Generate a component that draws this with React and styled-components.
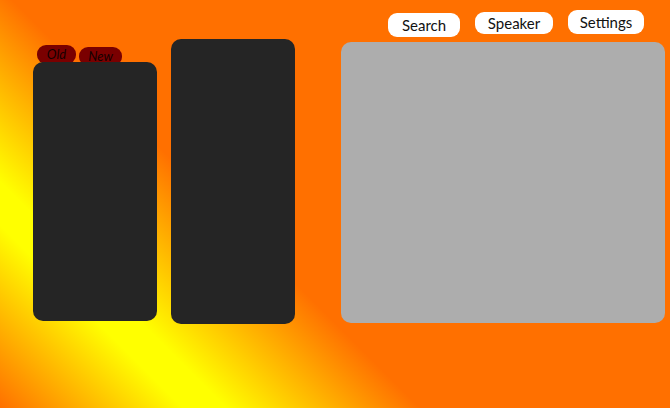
import React from "react";
import styled, { createGlobalStyle } from "styled-components";

const GlobalStyle = createGlobalStyle`
  html, body {
    margin: 0;
    padding: 0;
    height: 100%;
  }
  body {
    font-family: Lato, "Open Sans", sans-serif;
    overflow: hidden;
  }
`;

const Page = styled.div`
  width: 100vw;
  height: 100vh;
  box-sizing: border-box;
  padding-left: 33px;
  display: flex;
  align-items: flex-start;
  background: linear-gradient(
    45deg,
    #ff7000 0%,
    #ffff00 17%,
    #ffff00 21%,
    #ff7000 39%
  );
`;

const ListColumn = styled.div`
  width: 124px;
  margin-top: 45px;
  display: flex;
  flex-direction: column;
`;

const TabRow = styled.div`
  display: flex;
  align-items: flex-start;
  gap: 3px;
  padding-left: 4px;
  height: 21px;
  margin-bottom: -4px;
`;

const Tab = styled.div`
  margin-top: ${p => p.top}px;
  width: ${p => p.w}px;
  text-align: center;
  height: 19px;
  border-radius: 9px;
  background: #7a0000;
  color: #140000;
  font-style: italic;
  font-size: 13px;
  line-height: 19px;
`;

const Card = styled.div`
  position: relative;
  width: 124px;
  height: ${p => p.h}px;
  margin-top: ${p => p.top || 0}px;
  margin-left: ${p => p.left || 0}px;
  background: #252525;
  border-radius: 10px;
`;

const RightColumn = styled.div`
  width: 324px;
  margin-left: 46px;
  display: flex;
  flex-direction: column;
`;

const ButtonRow = styled.div`
  height: 42px;
  display: flex;
  align-items: flex-start;
  gap: 15px;
  padding-left: 47px;
`;

const Button = styled.button`
  margin-top: ${p => p.top}px;
  width: ${p => p.w}px;
  height: ${p => p.h}px;
  padding: 0;
  border: none;
  border-radius: 9px;
  background: #ffffff;
  color: #111111;
  font-family: Lato, "Open Sans", sans-serif;
  font-size: 15px;
  display: flex;
  align-items: center;
  justify-content: center;
`;

const Panel = styled.div`
  height: 281px;
  background: #adadad;
  border-radius: 10px;
`;

export default function App() {
  return (
    <>
      <GlobalStyle />
      <Page>
        <ListColumn>
          <TabRow>
            <Tab top={0} w={39}>Old</Tab>
            <Tab top={2} w={43}>New</Tab>
          </TabRow>
          <Card h={259} />
        </ListColumn>
        <Card h={285} top={39} left={14} />
        <RightColumn>
          <ButtonRow>
            <Button top={13} w={72} h={24}>Search</Button>
            <Button top={12} w={78} h={22}>Speaker</Button>
            <Button top={10} w={76} h={24}>Settings</Button>
          </ButtonRow>
          <Panel />
        </RightColumn>
      </Page>
    </>
  );
}
